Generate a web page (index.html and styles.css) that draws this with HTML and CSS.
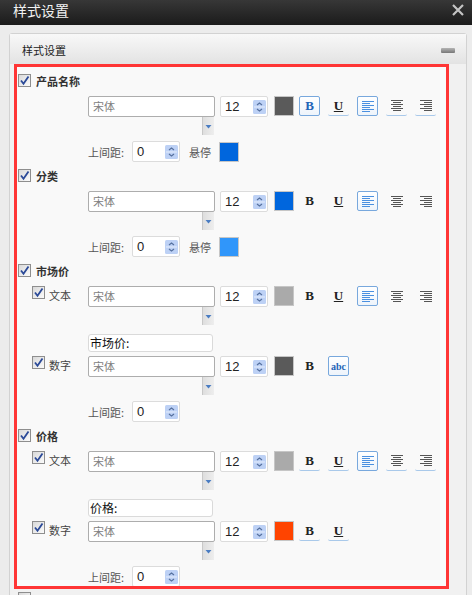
FILE: index.html
```html
<!DOCTYPE html>
<html lang="zh-CN">
  <head>
    <meta charset="UTF-8" />
    <meta name="viewport" content="width=device-width, initial-scale=1.0" />
    <title>样式设置</title>
    <link rel="stylesheet" href="styles.css">
  </head>
  <body>
    <svg class="defs" width="0" height="0">
      <symbol id="i-check" viewBox="0 0 11 11">
        <path d="M2 5.5l2.5 3.3L9.5 1.5" fill="none" stroke="#2b4a98" stroke-width="1.8" />
      </symbol>
      <symbol id="i-spin" viewBox="0 0 13 14">
        <rect width="13" height="14" rx="1.5" fill="#bdd1f5" />
        <path d="M1 7h11" stroke="#e6eefc" />
        <path d="M4 5l2.5-2 2.5 2M4 9l2.5 2 2.5-2" fill="none" stroke="#56719f" stroke-width="1.2" />
      </symbol>
      <symbol id="i-drop" viewBox="0 0 11 18">
        <path d="M2.5 8h6l-3 3.5z" fill="#4b7dc2" />
      </symbol>
      <symbol id="i-left" viewBox="0 0 12 11">
        <path d="M0 .5h12M0 2.5h8M0 4.5h12M0 6.5h8M0 8.5h12M0 10.5h8" stroke="currentColor" />
      </symbol>
      <symbol id="i-center" viewBox="0 0 12 11">
        <path d="M0 .5h12M2 2.5h8M0 4.5h12M2 6.5h8M0 8.5h12M2 10.5h8" stroke="currentColor" />
      </symbol>
      <symbol id="i-right" viewBox="0 0 12 11">
        <path d="M0 .5h12M4 2.5h8M0 4.5h12M4 6.5h8M0 8.5h12M4 10.5h8" stroke="currentColor" />
      </symbol>
    </svg>

    <div class="titlebar">
      <span class="title">样式设置</span>
      <svg class="close" viewBox="0 0 12 12"><path d="M1 1l10 10M11 1L1 11" stroke="#c4c4c4" stroke-width="2.2" /></svg>
    </div>

    <div class="panel">
      <div class="panel-head">
        <span>样式设置</span>
        <i class="minbar"></i>
      </div>
      <div class="panel-body">
        <div class="box">

          <!-- 产品名称 -->
          <div class="sec-head">
            <span class="cb"><svg><use href="#i-check" /></svg></span>
            <span>产品名称</span>
          </div>
          <div class="row">
            <div class="font-sel">
              <div class="font-input">宋体</div>
              <div class="font-arrow"><svg><use href="#i-drop" /></svg></div>
            </div>
            <div class="spin"><span>12</span><svg><use href="#i-spin" /></svg></div>
            <span class="swatch sw-dark"></span>
            <span class="tb on">B</span>
            <span class="tb line"><u>U</u></span>
            <span class="tb on"><svg><use href="#i-left" /></svg></span>
            <span class="tb line"><svg><use href="#i-center" /></svg></span>
            <span class="tb line"><svg><use href="#i-right" /></svg></span>
          </div>
          <div class="gap-row">
            <span class="gap-label">上间距:</span>
            <div class="spin"><span>0</span><svg><use href="#i-spin" /></svg></div>
            <span class="hover-label">悬停</span>
            <span class="swatch sw-blue"></span>
          </div>

          <!-- 分类 -->
          <div class="sec-head">
            <span class="cb"><svg><use href="#i-check" /></svg></span>
            <span>分类</span>
          </div>
          <div class="row">
            <div class="font-sel">
              <div class="font-input">宋体</div>
              <div class="font-arrow"><svg><use href="#i-drop" /></svg></div>
            </div>
            <div class="spin"><span>12</span><svg><use href="#i-spin" /></svg></div>
            <span class="swatch sw-blue"></span>
            <span class="tb">B</span>
            <span class="tb"><u>U</u></span>
            <span class="tb on"><svg><use href="#i-left" /></svg></span>
            <span class="tb"><svg><use href="#i-center" /></svg></span>
            <span class="tb"><svg><use href="#i-right" /></svg></span>
          </div>
          <div class="gap-row">
            <span class="gap-label">上间距:</span>
            <div class="spin"><span>0</span><svg><use href="#i-spin" /></svg></div>
            <span class="hover-label">悬停</span>
            <span class="swatch sw-sky"></span>
          </div>

          <!-- 市场价 -->
          <div class="sec-head">
            <span class="cb"><svg><use href="#i-check" /></svg></span>
            <span>市场价</span>
          </div>
          <div class="sub">
            <div class="sub-label">
              <span class="cb"><svg><use href="#i-check" /></svg></span>
              <span>文本</span>
            </div>
            <div class="font-sel">
              <div class="font-input">宋体</div>
              <div class="font-arrow"><svg><use href="#i-drop" /></svg></div>
            </div>
            <div class="spin"><span>12</span><svg><use href="#i-spin" /></svg></div>
            <span class="swatch sw-light"></span>
            <span class="tb">B</span>
            <span class="tb"><u>U</u></span>
            <span class="tb on"><svg><use href="#i-left" /></svg></span>
            <span class="tb"><svg><use href="#i-center" /></svg></span>
            <span class="tb"><svg><use href="#i-right" /></svg></span>
          </div>
          <div class="cap">市场价:</div>
          <div class="sub">
            <div class="sub-label">
              <span class="cb"><svg><use href="#i-check" /></svg></span>
              <span>数字</span>
            </div>
            <div class="font-sel">
              <div class="font-input">宋体</div>
              <div class="font-arrow"><svg><use href="#i-drop" /></svg></div>
            </div>
            <div class="spin"><span>12</span><svg><use href="#i-spin" /></svg></div>
            <span class="swatch sw-dark"></span>
            <span class="tb">B</span>
            <span class="tb on abc">abc</span>
          </div>
          <div class="gap-row">
            <span class="gap-label">上间距:</span>
            <div class="spin"><span>0</span><svg><use href="#i-spin" /></svg></div>
          </div>

          <!-- 价格 -->
          <div class="sec-head">
            <span class="cb"><svg><use href="#i-check" /></svg></span>
            <span>价格</span>
          </div>
          <div class="sub">
            <div class="sub-label">
              <span class="cb"><svg><use href="#i-check" /></svg></span>
              <span>文本</span>
            </div>
            <div class="font-sel">
              <div class="font-input">宋体</div>
              <div class="font-arrow"><svg><use href="#i-drop" /></svg></div>
            </div>
            <div class="spin"><span>12</span><svg><use href="#i-spin" /></svg></div>
            <span class="swatch sw-light"></span>
            <span class="tb line">B</span>
            <span class="tb line"><u>U</u></span>
            <span class="tb on"><svg><use href="#i-left" /></svg></span>
            <span class="tb line"><svg><use href="#i-center" /></svg></span>
            <span class="tb line"><svg><use href="#i-right" /></svg></span>
          </div>
          <div class="cap">价格:</div>
          <div class="sub">
            <div class="sub-label">
              <span class="cb"><svg><use href="#i-check" /></svg></span>
              <span>数字</span>
            </div>
            <div class="font-sel">
              <div class="font-input">宋体</div>
              <div class="font-arrow"><svg><use href="#i-drop" /></svg></div>
            </div>
            <div class="spin"><span>12</span><svg><use href="#i-spin" /></svg></div>
            <span class="swatch sw-orange"></span>
            <span class="tb line">B</span>
            <span class="tb line"><u>U</u></span>
          </div>
          <div class="gap-row">
            <span class="gap-label">上间距:</span>
            <div class="spin"><span>0</span><svg><use href="#i-spin" /></svg></div>
          </div>
        </div>

        <div class="tail">
          <span class="cb"></span>
        </div>
      </div>
    </div>
  </body>
</html>
```

FILE: styles.css
```css
body {
  margin: 0;
  height: 595px;
  overflow: hidden;
  background-color: #ececec;
  font-family: "Noto Sans CJK SC", sans-serif;
  font-size: 11px;
  color: #333;
}
.defs {
  position: absolute;
}
.titlebar {
  height: 25px;
  background: linear-gradient(#373737, #1b1b1b);
  display: flex;
  justify-content: space-between;
  align-items: flex-start;
  padding: 0 8px 0 13px;
}
.title {
  color: #f2f2f2;
  font-size: 14px;
  line-height: 20px;
}
.close {
  width: 12px;
  height: 12px;
  margin-top: 4px;
}

.panel {
  margin: 8px 5px 0 9px;
  border: 1px solid #d2d2d2;
  border-radius: 3px 3px 0 0;
  background-color: #f1f1f1;
}
.panel-head {
  height: 30px;
  background: linear-gradient(#f8f8f8, #e3e3e3);
  display: flex;
  justify-content: space-between;
  align-items: center;
  padding: 2px 11px 0 12px;
  box-sizing: border-box;
  color: #222;
}
.minbar {
  width: 14px;
  height: 5px;
  border-radius: 1px;
  background: linear-gradient(#b4b4b4, #777);
}
.panel-body {
  padding: 0 17px 0 4px;
}
.box {
  height: 519px;
  overflow: hidden;
  border: 3px solid #ff3535;
  background-color: #f9f9f9;
}

/* checkboxes */
.cb {
  flex: none;
  width: 13px;
  height: 13px;
  box-sizing: border-box;
  border: 1px solid #8e8e8e;
  background: linear-gradient(135deg, #d9d9d9, #fbfbfb);
  display: flex;
}
.cb svg {
  width: 11px;
  height: 11px;
}

.sec-head {
  height: 13px;
  display: flex;
  align-items: center;
  gap: 5px;
  margin: 7px 0 9px 1px;
  font-weight: bold;
}
.row {
  display: flex;
  align-items: flex-start;
  padding-left: 71px;
}
.sub {
  display: flex;
  align-items: flex-start;
}
.sub-label {
  width: 71px;
  box-sizing: border-box;
  padding-left: 15px;
  display: flex;
  gap: 4px;
  line-height: 18px;
  color: #444;
}

/* font picker */
.font-sel {
  width: 127px;
  display: flex;
  flex-direction: column;
  align-items: flex-end;
}
.font-input {
  width: 127px;
  height: 21px;
  box-sizing: border-box;
  border: 1px solid #adadad;
  border-radius: 2px;
  background-color: #fff;
  color: #808080;
  padding-left: 4px;
  line-height: 19px;
}
.font-arrow {
  width: 12px;
  height: 18px;
  margin-right: 1px;
  box-sizing: border-box;
  border-left: 1px solid #c8c8c8;
  background: linear-gradient(90deg, #dedede, #eeeeee);
}
.font-arrow svg {
  width: 11px;
  height: 18px;
}

.spin {
  width: 48px;
  height: 21px;
  margin-left: 5px;
  box-sizing: border-box;
  border: 1px solid #dcdcdc;
  border-radius: 2px;
  background-color: #fff;
  display: flex;
  justify-content: space-between;
  align-items: center;
  padding: 0 1px 0 4px;
  font: 13px "Liberation Sans", sans-serif;
  color: #222;
}
.spin svg {
  width: 13px;
  height: 14px;
}

.swatch {
  flex: none;
  width: 20px;
  height: 20px;
  box-sizing: border-box;
  border: 1px solid #c6c6c6;
  margin-left: 6px;
}
.sw-dark { background-color: #5a5a5a; }
.sw-blue { background-color: #0066dd; }
.sw-sky { background-color: #3096fa; }
.sw-light { background-color: #aaaaaa; }
.sw-orange { background-color: #ff4400; }

/* toolbar buttons */
.tb {
  flex: none;
  width: 21px;
  height: 20px;
  box-sizing: border-box;
  margin-left: 8px;
  border-radius: 2px;
  display: flex;
  align-items: center;
  justify-content: center;
  font: bold 13px "Liberation Serif", serif;
  color: #222;
}
.swatch + .tb {
  margin-left: 5px;
}
.tb svg {
  width: 12px;
  height: 11px;
  color: #555;
}
.tb.line {
  border-bottom: 1px solid #a9c9ea;
}
.tb.on {
  border: 1px solid #78a8dd;
  background: linear-gradient(#ffffff, #eef4fb);
  color: #1f64b8;
}
.tb.on svg {
  color: #4a90e0;
}
.tb.abc {
  font-size: 10px;
}

.cap {
  width: 125px;
  height: 18px;
  box-sizing: border-box;
  margin: 9px 0 4px 71px;
  border: 1px solid #dadada;
  border-radius: 3px;
  background-color: #fff;
  padding-left: 1px;
  font-size: 12px;
  line-height: 16px;
  color: #111;
}

.gap-row {
  display: flex;
  align-items: center;
  padding-left: 71px;
  margin-top: 6px;
  color: #555;
}
.gap-label {
  width: 44px;
}
.gap-row .spin {
  margin-left: 0;
}
.hover-label {
  margin: 0 8px 0 9px;
}
.gap-row .swatch {
  margin-left: 0;
}

.tail {
  padding: 3px 0 0 4px;
}
```
